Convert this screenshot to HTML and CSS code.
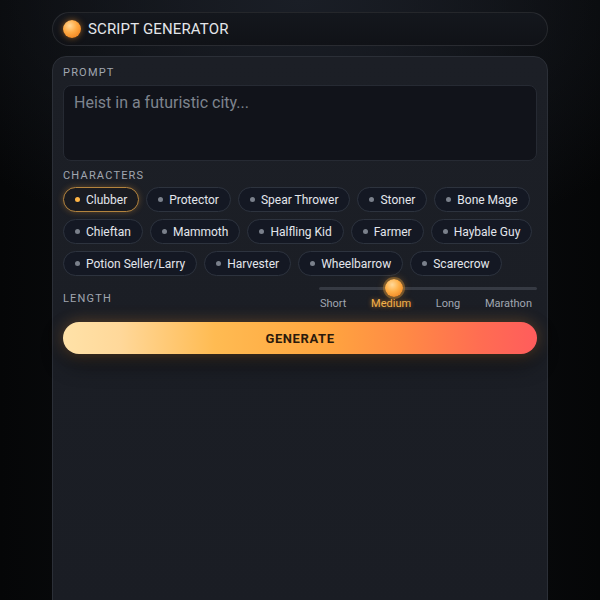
FILE: index.html
```html
<!DOCTYPE html>
<html>
<head>
<meta charset="utf-8">
<link rel="stylesheet" href="styles.css">
</head>
<body>
<div class="app">
  <header class="titlebar">
    <span class="orb"></span>
    <span class="title">SCRIPT GENERATOR</span>
  </header>
  <main class="card">
    <div class="label">PROMPT</div>
    <div class="prompt">Heist in a futuristic city...</div>
    <div class="label chars-label">CHARACTERS</div>
    <div class="chips">
      <span class="chip selected"><i></i>Clubber</span>
      <span class="chip"><i></i>Protector</span>
      <span class="chip"><i></i>Spear Thrower</span>
      <span class="chip"><i></i>Stoner</span>
      <span class="chip"><i></i>Bone Mage</span>
      <span class="chip"><i></i>Chieftan</span>
      <span class="chip"><i></i>Mammoth</span>
      <span class="chip"><i></i>Halfling Kid</span>
      <span class="chip"><i></i>Farmer</span>
      <span class="chip"><i></i>Haybale Guy</span>
      <span class="chip"><i></i>Potion Seller/Larry</span>
      <span class="chip"><i></i>Harvester</span>
      <span class="chip"><i></i>Wheelbarrow</span>
      <span class="chip"><i></i>Scarecrow</span>
    </div>
    <div class="length-row">
      <div class="label length-label">LENGTH</div>
      <div class="slider">
        <div class="track"><span class="thumb"></span></div>
        <div class="stops">
          <span>Short</span>
          <span class="active">Medium</span>
          <span>Long</span>
          <span>Marathon</span>
        </div>
      </div>
    </div>
    <button class="generate">GENERATE</button>
  </main>
</div>
</body>
</html>
```
FILE: styles.css
```css
* { box-sizing: border-box; }
html, body {
  margin: 0;
  height: 100%;
}
body {
  background:
    radial-gradient(ellipse 420px 260px at 50% 0%, #1a1e26 0%, rgba(20,23,29,0) 100%),
    linear-gradient(90deg, #050607 0%, #0d0f13 40%, #0d0f13 60%, #050607 100%);
  background-color: #0a0b0d;
  font-family: Roboto, "Liberation Sans", sans-serif;
  color: #e2e5ea;
  overflow: hidden;
}
.app {
  width: 496px;
  margin: 0 auto;
  padding-top: 12px;
}
.titlebar {
  height: 34px;
  border-radius: 17px;
  border: 1px solid rgba(255,255,255,0.09);
  background: linear-gradient(180deg, #14171d, #101217);
  display: flex;
  align-items: center;
  padding-left: 10px;
  gap: 7px;
}
.orb {
  width: 18px;
  height: 18px;
  border-radius: 50%;
  background: radial-gradient(circle at 38% 32%, #ffd99a 0%, #ffab45 40%, #f38a25 75%, #d8681a 100%);
  box-shadow: 0 0 6px rgba(255,150,40,0.55);
}
.title {
  font-size: 15px;
  letter-spacing: 0.15px;
  color: #e4e6ea;
}
.card {
  margin-top: 10px;
  height: 560px;
  border: 1px solid #2b2f37;
  border-radius: 14px;
  background: linear-gradient(180deg, #1c1f26 0%, #1a1d24 100%);
  padding: 9px 10px 0;
}
.label {
  font-size: 11px;
  line-height: 14px;
  letter-spacing: 1.2px;
  color: #a0a6b0;
  font-weight: 400;
}
.prompt {
  margin-top: 5px;
  height: 76px;
  border-radius: 8px;
  background: #11131a;
  border: 1px solid #262a33;
  padding: 7px 10px;
  font-size: 16px;
  line-height: 20px;
  color: #7e848e;
}
.chars-label {
  margin-top: 8px;
}
.chips {
  margin-top: 4px;
  display: flex;
  flex-wrap: wrap;
  gap: 7px;
}
.chip {
  height: 25px;
  display: inline-flex;
  align-items: center;
  gap: 6px;
  padding: 0 11px;
  border-radius: 13px;
  border: 1px solid #2d333e;
  background: #141823;
  font-size: 12px;
  color: #e3e6ec;
  white-space: nowrap;
}
.chip i {
  width: 5px;
  height: 5px;
  border-radius: 50%;
  background: #7a808b;
}
.chip.selected {
  border-color: #b4843e;
  background: #1a1b20;
  box-shadow: 0 0 6px rgba(255,170,60,0.3);
}
.chip.selected i {
  background: #ffb545;
}
.length-row {
  margin-top: 3px;
  display: flex;
  justify-content: space-between;
  align-items: center;
}
.length-label {
  padding-top: 7px;
}
.slider {
  width: 218px;
}
.track {
  position: relative;
  height: 18px;
}
.track::before {
  content: "";
  position: absolute;
  left: 0;
  right: 0;
  top: 8px;
  height: 3px;
  border-radius: 2px;
  background: #363a43;
}
.thumb {
  position: absolute;
  left: 66px;
  top: 0;
  width: 18px;
  height: 18px;
  border-radius: 50%;
  background: radial-gradient(circle at 40% 32%, #ffd99a 0%, #ffb048 42%, #f08a26 80%, #d66a1c 100%);
  box-shadow: 0 0 0 2px rgba(170,120,50,0.55), 0 0 8px rgba(255,160,50,0.45);
}
.stops {
  display: flex;
  justify-content: space-between;
  padding: 0 5px 0 1px;
  font-size: 11px;
  line-height: 14px;
  color: #a0a6b0;
}
.stops .active {
  color: #f3b24a;
  text-shadow: 0 0 4px rgba(255,150,40,0.7);
}
.generate {
  display: block;
  width: 100%;
  height: 32px;
  margin-top: 11px;
  border: none;
  border-radius: 16px;
  background: linear-gradient(90deg, #ffe2a8 0%, #ffd89a 12%, #ffbb52 32%, #ffa63f 55%, #ff8a45 72%, #ff6d52 88%, #ff5c5c 100%);
  font-family: Roboto, "Liberation Sans", sans-serif;
  font-size: 13px;
  font-weight: 700;
  letter-spacing: 0.6px;
  color: #2b1a0c;
  box-shadow: 0 0 16px rgba(255,160,60,0.3), 0 10px 22px rgba(0,0,0,0.45);
}
```
